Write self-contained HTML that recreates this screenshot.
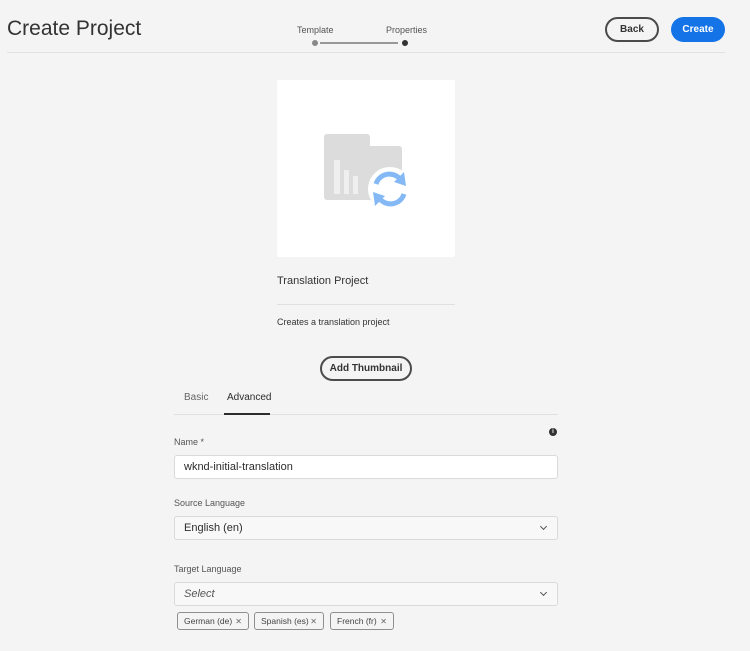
<!DOCTYPE html>
<html><head><meta charset="utf-8"><style>
*{box-sizing:border-box;margin:0;padding:0}
body{width:750px;height:651px;background:#f4f4f4;font-family:"Liberation Sans",sans-serif;color:#2c2c2c;position:relative;overflow:hidden}
.a{position:absolute}
.t{font-size:12px;color:#4b4b4b}
.btn{position:absolute;height:25px;border-radius:13px;font-size:10px;font-weight:bold;display:flex;align-items:center;justify-content:center;white-space:nowrap}
.field{position:absolute;left:174px;width:384px;height:24px;border:1px solid #dadada;border-radius:3px;font-size:11px;padding-left:9px;display:flex;align-items:center}
.lbl{position:absolute;left:174px;font-size:9px;color:#555}
.tag{position:absolute;top:612px;height:18px;border:1px solid #909090;border-radius:3px;background:#f4f4f4;font-size:8.5px;color:#444;padding:0 6px;display:flex;align-items:center;justify-content:space-between;white-space:nowrap}
.tag span{font-size:8px;color:#666}
.chev{position:absolute;right:11px;top:7px;width:5px;height:5px;border-right:1.3px solid #555;border-bottom:1.3px solid #555;transform:rotate(45deg)}
</style></head><body>
<div class="a" style="left:7px;top:17px;font-size:21px;color:#333">Create Project</div>
<div class="a t" style="left:297px;top:25px;font-size:9px;color:#555">Template</div>
<div class="a t" style="left:386px;top:25px;font-size:9px;color:#555">Properties</div>
<div class="a" style="left:312px;top:40px;width:6px;height:6px;border-radius:50%;background:#888"></div>
<div class="a" style="left:320px;top:42px;width:78px;height:2px;background:#999"></div>
<div class="a" style="left:402px;top:40px;width:6px;height:6px;border-radius:50%;background:#333"></div>
<div class="btn" style="left:605px;top:17px;width:54px;border:2px solid #4b4b4b;color:#333">Back</div>
<div class="btn" style="left:671px;top:17px;width:54px;background:#1473e6;color:#fff">Create</div>
<div class="a" style="left:7px;top:52px;width:718px;height:1px;background:#e2e2e2"></div>

<div class="a" style="left:277px;top:80px;width:178px;height:177px;background:#fff;border-radius:2px"></div>
<svg class="a" style="left:322px;top:132px" width="90" height="80" viewBox="0 0 90 80">
<rect x="2" y="2" width="46" height="16" rx="3" fill="#dcdcdc"/>
<rect x="2" y="14" width="78" height="54" rx="3" fill="#dcdcdc"/>
<rect x="12" y="28" width="6" height="34" fill="#efefef"/>
<rect x="22" y="38" width="5" height="24" fill="#efefef"/>
<rect x="31" y="44" width="5" height="18" fill="#efefef"/>
<circle cx="68" cy="57" r="22" fill="#fff"/>
<path d="M54 52 A14 14 0 0 1 80 50" fill="none" stroke="#84b9f5" stroke-width="5"/>
<path d="M82 40 L84 54 L72 50 Z" fill="#84b9f5"/>
<path d="M82 62 A14 14 0 0 1 56 64" fill="none" stroke="#84b9f5" stroke-width="5"/>
<path d="M53 74 L51 60 L63 64 Z" fill="#84b9f5"/>
</svg>
<div class="a" style="left:277px;top:275px;font-size:11px;color:#333">Translation Project</div>
<div class="a" style="left:277px;top:304px;width:178px;height:1px;background:#e0e0e0"></div>
<div class="a" style="left:277px;top:317px;font-size:9px;color:#333">Creates a translation project</div>
<div class="btn" style="left:320px;top:356px;width:92px;border:2px solid #4b4b4b;color:#333">Add Thumbnail</div>

<div class="a" style="left:184px;top:392px;font-size:10px;color:#666">Basic</div>
<div class="a" style="left:227px;top:392px;font-size:10px;color:#2c2c2c">Advanced</div>
<div class="a" style="left:174px;top:414px;width:384px;height:1px;background:#e0e0e0"></div>
<div class="a" style="left:224px;top:413px;width:46px;height:2px;background:#2c2c2c"></div>

<div class="lbl" style="top:437px">Name *</div>
<div class="a" style="left:549px;top:428px;width:8px;height:8px;border-radius:50%;background:#333;color:#fff;font-size:6px;font-weight:bold;text-align:center;line-height:8px">i</div>
<div class="field" style="top:455px;background:#fff">wknd-initial-translation</div>
<div class="lbl" style="top:498px">Source Language</div>
<div class="field" style="top:516px;background:#f8f8f8">English (en)<div class="chev"></div></div>
<div class="lbl" style="top:564px">Target Language</div>
<div class="field" style="top:582px;background:#f8f8f8;font-style:italic;color:#555">Select<div class="chev"></div></div>
<div class="tag" style="left:177px;width:72px">German (de)<span>✕</span></div>
<div class="tag" style="left:254px;width:70px">Spanish (es)<span>✕</span></div>
<div class="tag" style="left:330px;width:64px">French (fr)<span>✕</span></div>
</body></html>
